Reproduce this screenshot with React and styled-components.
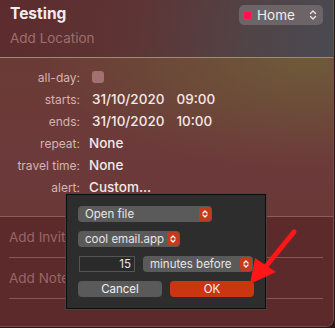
import React from 'react'
import styled, { createGlobalStyle } from 'styled-components'

const Global = createGlobalStyle`
  html, body { margin: 0; padding: 0; background: #2b1718; }
  body { font-family: Inter, "Liberation Sans", sans-serif; -webkit-font-smoothing: antialiased; }
`

const Window = styled.div`
  position: relative;
  width: 334px;
  height: 327px;
  overflow: hidden;
  border-bottom-right-radius: 8px;
  border-right: 1px solid #7a4a4a;
  border-bottom: 1px solid #7a4a4a;
  box-sizing: border-box;
  display: flex;
  flex-direction: column;
`

const Header = styled.div`
  height: 58px;
  padding: 4px 0 0 10px;
  box-sizing: border-box;
  display: flex;
  justify-content: space-between;
  background: linear-gradient(100deg, #5c2b2d 0%, #5e3434 40%, #514447 75%, #494a51 100%);
  border-bottom: 1px solid #a08a72;
`

const TitleCol = styled.div`
  display: flex;
  flex-direction: column;
`

const Title = styled.div`
  font-size: 15.5px;
  font-weight: 700;
  color: #f4ecec;
  line-height: 20px;
`

const Location = styled.div`
  margin-top: 5px;
  font-size: 13.5px;
  color: #9c6f6d;
  line-height: 18px;
`

const CalPopup = styled.div`
  margin: 1px 10px 0 0;
  width: 84px;
  height: 20px;
  border-radius: 5px;
  background: #6c6466;
  display: flex;
  align-items: center;
  padding: 0 6px 0 5px;
  box-sizing: border-box;
  gap: 6px;
  color: #f2eeee;
  font-size: 13.5px;
`

const Dot = styled.span`
  width: 7px;
  height: 7px;
  background: #ff1448;
  border-radius: 1px;
  box-shadow: 0 0 2px #ff3a60;
`

const Chevrons = styled.svg`
  margin-left: auto;
`

const Fields = styled.div`
  height: 159px;
  box-sizing: border-box;
  padding-top: 8px;
  background:
    radial-gradient(ellipse 260px 110px at 92% 0%, rgba(110, 92, 58, 0.95) 0%, rgba(110, 92, 58, 0) 100%),
    linear-gradient(180deg, #6a3b36 0%, #6c3a3a 60%, #6b3838 100%);
  border-bottom: 1px solid #8e5b5b;
  display: grid;
  grid-template-columns: 80px auto;
  grid-auto-rows: 22px;
  column-gap: 9px;
  align-items: center;
`

const Label = styled.div`
  text-align: right;
  font-size: 12px;
  color: #d4b3b1;
`

const Value = styled.div`
  font-size: 13.5px;
  font-weight: 500;
  color: #f3e9e8;
  display: flex;
  gap: 12px;
  margin-left: ${p => (p.$inset ? '3px' : '0')};
`

const Check = styled.div`
  width: 12px;
  height: 12px;
  margin-left: 3px;
  border-radius: 3px;
  background: #a2706f;
`

const Lower = styled.div`
  flex: 1;
  background: #5c2a2b;
  padding: 0 10px 0 9px;
`

const LowerRow = styled.div`
  height: 40px;
  display: flex;
  align-items: center;
  border-bottom: 1px solid #8a5656;
  font-size: 13.5px;
  color: #9a6665;
`

const Dialog = styled.div`
  position: absolute;
  left: 66px;
  top: 194px;
  width: 200px;
  height: 115px;
  box-sizing: border-box;
  background: #2e2d2d;
  border: 1px solid #0e0e0e;
  box-shadow: 0 0 0 1px #4a4040;
  padding: 11px 11px 0 11px;
  display: flex;
  flex-direction: column;
  gap: 9px;
  font-size: 11.5px;
  color: #e8e6e6;
`

const Row = styled.div`
  display: flex;
  align-items: center;
  gap: 8px;
`

const Popup = styled.div`
  width: ${p => p.$w}px;
  height: 16px;
  border-radius: 4px;
  background: #5b5a5a;
  display: flex;
  align-items: center;
  padding-left: 7px;
  box-sizing: border-box;
  position: relative;
`

const Stepper = styled.span`
  position: absolute;
  right: 1px;
  top: 1px;
  width: 12px;
  height: 14px;
  border-radius: 3px;
  background: #c53a1c;
  display: flex;
  align-items: center;
  justify-content: center;
`

const Field = styled.div`
  width: 56px;
  height: 16px;
  box-sizing: border-box;
  border: 1px solid #555;
  background: #2a2a2a;
  text-align: right;
  padding-right: 3px;
  line-height: 14px;
  margin-left: 1px;
`

const Button = styled.div`
  width: 84px;
  height: 16px;
  border-radius: 4px;
  background: ${p => (p.$primary ? '#c9360f' : '#5b5a5a')};
  text-align: center;
  line-height: 16px;
  color: #f2f0f0;
`

const Arrow = styled.svg`
  position: absolute;
  left: 245px;
  top: 225px;
`

const Chev = ({ color = '#fff' }) => (
  <svg width="6" height="10" viewBox="0 0 6 10">
    <path d="M1 4 L3 2 L5 4 M1 6 L3 8 L5 6" fill="none" stroke={color} strokeWidth="1.3" strokeLinecap="round" strokeLinejoin="round" />
  </svg>
)

const Select = ({ w, children }) => (
  <Popup $w={w}>
    {children}
    <Stepper>
      <Chev />
    </Stepper>
  </Popup>
)

export default function App() {
  return (
    <>
      <Global />
      <Window>
        <Header>
          <TitleCol>
            <Title>Testing</Title>
            <Location>Add Location</Location>
          </TitleCol>
          <CalPopup>
            <Dot />
            Home
            <Chevrons width="8" height="12" viewBox="0 0 8 12">
              <path d="M1.5 4.5 L4 2 L6.5 4.5 M1.5 7.5 L4 10 L6.5 7.5" fill="none" stroke="#e8e4e4" strokeWidth="1.4" strokeLinecap="round" strokeLinejoin="round" />
            </Chevrons>
          </CalPopup>
        </Header>
        <Fields>
          <Label>all-day:</Label>
          <Check />
          <Label>starts:</Label>
          <Value $inset><span>31/10/2020</span><span>09:00</span></Value>
          <Label>ends:</Label>
          <Value $inset><span>31/10/2020</span><span>10:00</span></Value>
          <Label>repeat:</Label>
          <Value>None</Value>
          <Label>travel time:</Label>
          <Value>None</Value>
          <Label>alert:</Label>
          <Value>Custom...</Value>
        </Fields>
        <Lower>
          <LowerRow>Add Invitees</LowerRow>
          <LowerRow>Add Notes</LowerRow>
        </Lower>
        <Dialog>
          <Select w={134}>Open file</Select>
          <Select w={102}>cool email.app</Select>
          <Row>
            <Field>15</Field>
            <Select w={110}>minutes before</Select>
          </Row>
          <Row>
            <Button>Cancel</Button>
            <Button $primary>OK</Button>
          </Row>
        </Dialog>
        <Arrow width="60" height="65" viewBox="0 0 60 65">
          <line x1="49" y1="7" x2="22" y2="40" stroke="#ff1616" strokeWidth="5" strokeLinecap="round" />
          <polygon points="5,59 10,33 31,47" fill="#ff1616" />
        </Arrow>
      </Window>
    </>
  )
}
